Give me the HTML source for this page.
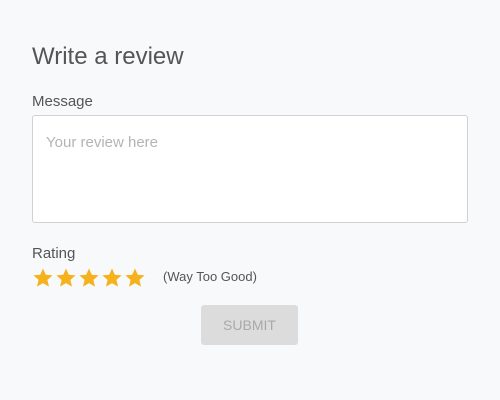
<!DOCTYPE html>
<html><head><style>
body{margin:0;width:500px;height:400px;background:#f8f9fb;font-family:"Liberation Sans",sans-serif;position:relative;overflow:hidden}
.a{position:absolute;white-space:nowrap}
</style></head><body>
<div class="a" style="left:32px;top:43px;font-size:24px;color:#555">Write a review</div>
<div class="a" style="left:32px;top:93px;font-size:15px;color:#555">Message</div>
<div class="a" style="left:32px;top:115px;width:434px;height:106px;background:#fff;border:1px solid #cfd1d4;border-radius:3px"></div>
<div class="a" style="left:46px;top:134px;font-size:15px;color:#b4b4b4">Your review here</div>
<div class="a" style="left:32px;top:245px;font-size:15px;color:#555">Rating</div>
<svg class="a" style="left:32px;top:267px" width="120" height="22" viewBox="0 0 120 22">
<g fill="#f5b21c">
<path id="s" d="M11 1.5l2.8 6.3 6.8.6-5.2 4.5 1.6 6.7L11 16.1 5 19.6l1.6-6.7L1.4 8.4l6.8-.6z"/>
<use href="#s" x="23"/><use href="#s" x="46"/><use href="#s" x="69"/><use href="#s" x="92"/>
</g></svg>
<div class="a" style="left:163px;top:269px;font-size:13px;color:#555">(Way Too Good)</div>
<div class="a" style="left:201px;top:305px;width:97px;height:40px;background:#dcdcdd;border-radius:3px;color:#a9a9a9;font-size:14px;line-height:40px;text-align:center">SUBMIT</div>
</body></html>
